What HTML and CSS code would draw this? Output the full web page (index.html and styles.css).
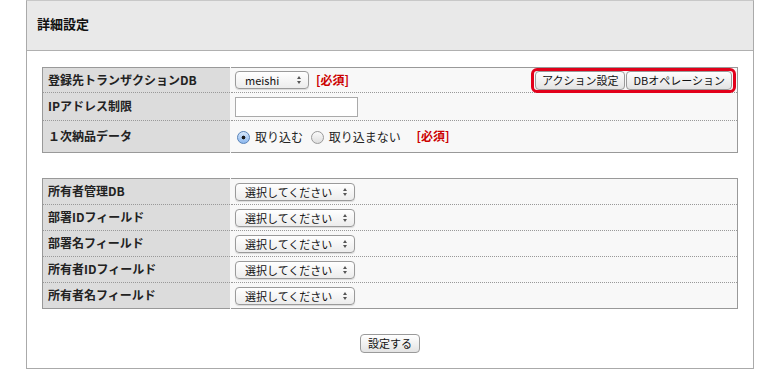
FILE: index.html
```html
<!DOCTYPE html>
<html lang="ja">
<head>
    <meta charset="UTF-8">
    <title>詳細設定</title>
    <link rel="stylesheet" href="styles.css">
</head>
<body>
    <div class="panel">
        <div class="panel-head">詳細設定</div>
        <div class="panel-body">
            <table class="form-table">
                <tr class="row-db">
                    <th>登録先トランザクションDB</th>
                    <td>
                        <div class="cell-flex">
                            <span class="select-wrap"><select class="select select-db"><option>meishi</option></select></span>
                            <span class="required">[必須]</span>
                            <div class="action-box">
                                <button class="btn">アクション設定</button><button class="btn">DBオペレーション</button>
                            </div>
                        </div>
                    </td>
                </tr>
                <tr class="row-ip">
                    <th>IPアドレス制限</th>
                    <td><input type="text" class="text-input"></td>
                </tr>
                <tr class="row-radio">
                    <th>１次納品データ</th>
                    <td>
                        <label class="radio-label"><input type="radio" name="import" class="radio" checked>取り込む</label>
                        <label class="radio-label"><input type="radio" name="import" class="radio">取り込まない</label>
                        <span class="required req-gap">[必須]</span>
                    </td>
                </tr>
            </table>

            <table class="form-table second">
                <tr>
                    <th>所有者管理DB</th>
                    <td><span class="select-wrap"><select class="select select-choose"><option>選択してください</option></select></span></td>
                </tr>
                <tr>
                    <th>部署IDフィールド</th>
                    <td><span class="select-wrap"><select class="select select-choose"><option>選択してください</option></select></span></td>
                </tr>
                <tr>
                    <th>部署名フィールド</th>
                    <td><span class="select-wrap"><select class="select select-choose"><option>選択してください</option></select></span></td>
                </tr>
                <tr>
                    <th>所有者IDフィールド</th>
                    <td><span class="select-wrap"><select class="select select-choose"><option>選択してください</option></select></span></td>
                </tr>
                <tr>
                    <th>所有者名フィールド</th>
                    <td><span class="select-wrap"><select class="select select-choose"><option>選択してください</option></select></span></td>
                </tr>
            </table>

            <div class="submit-row">
                <button class="btn btn-submit">設定する</button>
            </div>
        </div>
    </div>
</body>
</html>
```

FILE: styles.css
```css
* {
    margin: 0;
    padding: 0;
    box-sizing: border-box;
    font-family: "Noto Sans CJK JP", "Noto Sans", sans-serif;
}

body {
    background: #ffffff;
    color: #222;
}

.panel {
    margin-left: 26px;
    width: 728px;
    height: 369px;
    border: 1px solid #aaaaaa;
    border-top-color: #c8c8c8;
}

.panel-head {
    height: 50px;
    background: #e9e9e9;
    border-bottom: 1px solid #b0b0b0;
    padding-left: 10px;
    font-size: 13px;
    font-weight: bold;
    line-height: 46px;
    color: #111;
}

.panel-body {
    padding: 16px 15px 0;
}

.form-table {
    width: 696px;
    border-collapse: collapse;
    border: 1px solid #999;
    background: #f8f8f8;
    font-size: 12px;
    line-height: 16px;
}

.form-table.second {
    margin-top: 25px;
}

.form-table th {
    width: 188px;
    background: #dcdcdc;
    text-align: left;
    font-weight: bold;
    padding: 0 5px 1px;
    border-bottom: 1px dotted #999;
    border-right: 1px solid #f8f8f8;
    color: #222;
}

.form-table td {
    padding: 0 4px;
    border-bottom: 1px dotted #999;
}

.form-table tr {
    height: 26px;
}

.form-table .row-db {
    height: 25px;
}

.form-table .row-ip {
    height: 28px;
}

.form-table .row-radio {
    height: 32px;
}

.cell-flex {
    display: flex;
    align-items: center;
    height: 18px;
}

.select-wrap {
    position: relative;
    display: inline-block;
    vertical-align: middle;
    height: 18px;
}

.select-wrap::after {
    content: "";
    position: absolute;
    right: 8px;
    top: 5px;
    width: 0;
    height: 0;
    border-left: 2.5px solid transparent;
    border-right: 2.5px solid transparent;
    border-bottom: 3px solid #555;
    pointer-events: none;
}

.select-wrap::before {
    content: "";
    position: absolute;
    right: 8px;
    top: 10px;
    width: 0;
    height: 0;
    border-left: 2.5px solid transparent;
    border-right: 2.5px solid transparent;
    border-top: 3px solid #555;
    pointer-events: none;
}

.select {
    appearance: none;
    -webkit-appearance: none;
    display: block;
    height: 18px;
    border: 1px solid #9a9a9a;
    border-radius: 4px;
    background: linear-gradient(#ffffff, #ececec);
    box-shadow: 0 1px 1px rgba(0, 0, 0, 0.12);
    font-size: 11px;
    color: #111;
    padding: 0 0 0 9px;
    line-height: 16px;
}

.select-db {
    width: 74px;
}

.select-choose {
    width: 120px;
}

.required {
    color: #cc0000;
    font-weight: bold;
    font-size: 12px;
    margin-left: 7px;
}

.req-gap {
    margin-left: 10px;
}

.action-box {
    margin: -4px -3px -4px auto;
    display: flex;
    gap: 1px;
    padding: 0 1px;
    border: 3px solid #e2001a;
    border-radius: 6px;
}

.btn {
    height: 19px;
    border: 1px solid #9a9a9a;
    border-radius: 4px;
    background: linear-gradient(#ffffff, #e3e3e3);
    font-size: 11px;
    color: #111;
    padding: 0 6px;
    line-height: 17px;
    cursor: pointer;
}

.text-input {
    width: 123px;
    height: 20px;
    border: 1px solid #aaa;
    background: #fff;
    vertical-align: middle;
    margin-top: 1px;
}

.radio-label {
    display: inline-flex;
    align-items: center;
    vertical-align: middle;
    margin-right: 3px;
    font-size: 12px;
    color: #222;
}

.radio {
    appearance: none;
    -webkit-appearance: none;
    width: 13px;
    height: 13px;
    border-radius: 50%;
    border: 1px solid #9a9a9a;
    background: linear-gradient(#fafafa, #dedede);
    margin: 0 5px 0 2px;
    position: relative;
}

.radio:checked {
    border-color: #5a84b8;
    background: radial-gradient(circle, #1a1a1a 0 1.6px, transparent 2.2px), linear-gradient(#d6e7fb, #8db8ee);
}

.submit-row {
    margin-top: 25px;
    display: flex;
    justify-content: center;
}

.btn-submit {
    width: 60px;
    height: 19px;
    padding: 0;
    font-size: 11px;
}
```
